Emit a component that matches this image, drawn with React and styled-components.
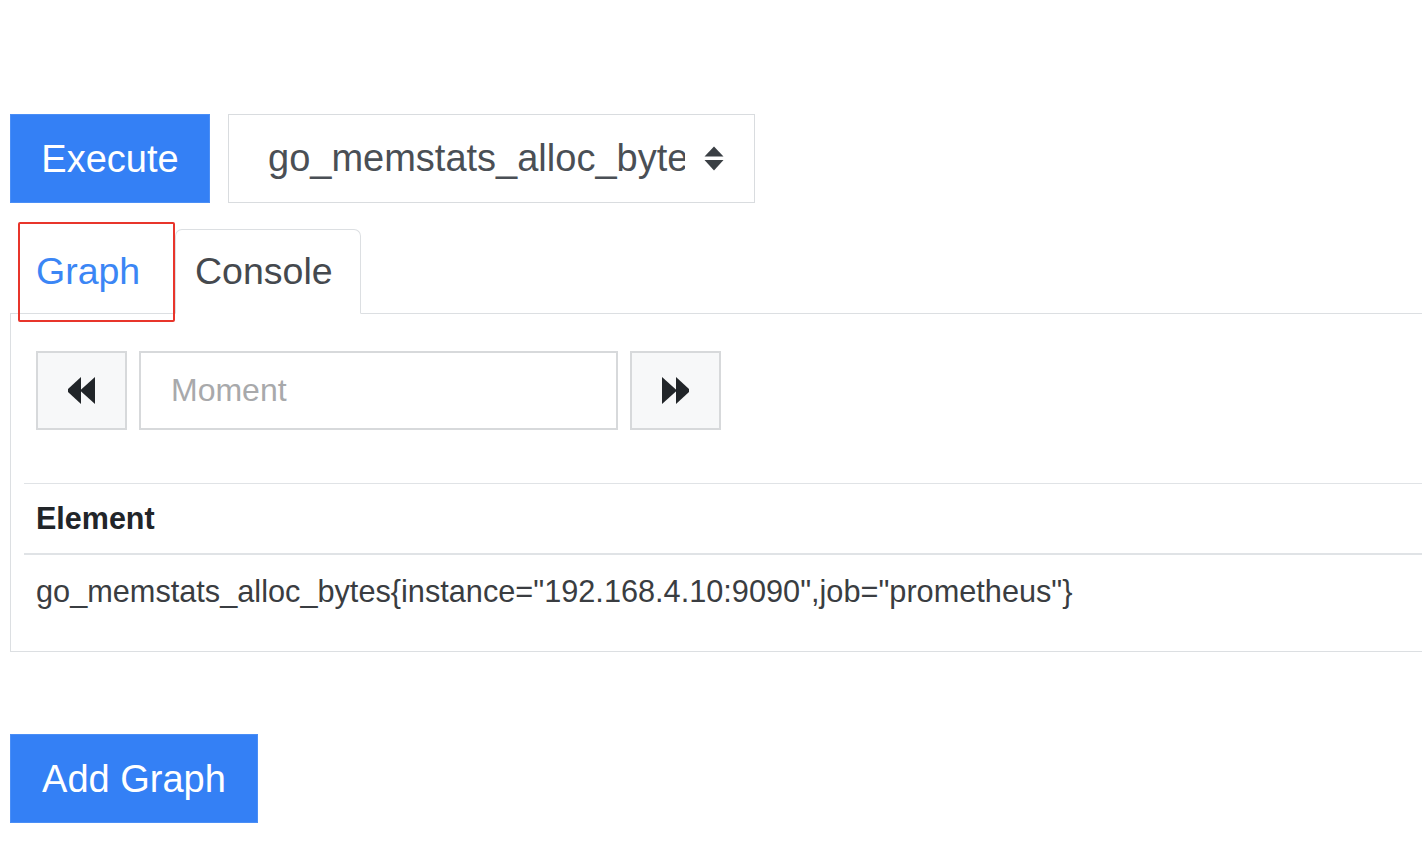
import styled, { createGlobalStyle } from "styled-components";

const GlobalStyle = createGlobalStyle`
  body {
    margin: 0;
    background: #fff;
    overflow: hidden;
    font-family: "Liberation Sans", Arial, sans-serif;
  }
  * {
    box-sizing: border-box;
  }
`;

function BackwardIcon() {
  return (
    <svg width="29" height="29" viewBox="0 0 29 29" fill="#212529">
      <polygon points="1,13 14,1 14,28 1,16" />
      <polygon points="13,14.5 28,1 28,28" />
    </svg>
  );
}

function ForwardIcon() {
  return (
    <svg width="29" height="29" viewBox="0 0 29 29" fill="#212529">
      <polygon points="28,13 15,1 15,28 28,16" />
      <polygon points="16,14.5 1,1 1,28" />
    </svg>
  );
}

function SortIcon() {
  return (
    <svg width="20" height="25" viewBox="0 0 20 25" fill="#3a3f44">
      <polygon points="10,0.5 19.5,10.5 0.5,10.5" />
      <polygon points="10,24.5 19.5,14 0.5,14" />
    </svg>
  );
}

export default function App() {
  return (
    <>
      <GlobalStyle />
      <Page>
        <QueryRow>
          <PrimaryButton $width={200}>Execute</PrimaryButton>
          <MetricSelect>
            <SelectText>go_memstats_alloc_bytes</SelectText>
            <SortIcon />
          </MetricSelect>
        </QueryRow>

        <TabList>
          <Tab $width={157} $active $highlighted>
            Graph
          </Tab>
          <Tab $width={186} $bordered>
            Console
          </Tab>
        </TabList>

        <Panel>
          <Controls>
            <StepButton>
              <BackwardIcon />
            </StepButton>
            <MomentInput placeholder="Moment" />
            <StepButton>
              <ForwardIcon />
            </StepButton>
          </Controls>

          <ResultTable>
            <thead>
              <tr>
                <HeadCell>Element</HeadCell>
              </tr>
            </thead>
            <tbody>
              <tr>
                <Cell>
                  go_memstats_alloc_bytes{"{"}instance="192.168.4.10:9090",job="prometheus"{"}"}
                </Cell>
              </tr>
            </tbody>
          </ResultTable>
        </Panel>

        <AddRow>
          <PrimaryButton $width={248}>Add Graph</PrimaryButton>
        </AddRow>
      </Page>
    </>
  );
}

const Page = styled.div`
  padding: 114px 0 0 10px;
  width: 1460px;
`;

const QueryRow = styled.div`
  display: flex;
  gap: 18px;
`;

const PrimaryButton = styled.button`
  width: ${({ $width }) => $width}px;
  height: 89px;
  background-color: #3480f5;
  border: 1px solid #4a8ef6;
  color: #fff;
  font-family: "Liberation Sans", Arial, sans-serif;
  font-size: 38px;
  padding: 2px 0 0;
  cursor: pointer;
`;

const MetricSelect = styled.div`
  width: 527px;
  height: 89px;
  border: 1px solid #d9dcdf;
  display: flex;
  align-items: center;
  gap: 19px;
  padding: 0 0 0 39px;
  background: #fff;
`;

const SelectText = styled.span`
  width: 417px;
  flex: none;
  overflow: hidden;
  white-space: nowrap;
  text-overflow: clip;
  font-size: 38px;
  color: #4a4f55;
`;

const TabList = styled.div`
  display: flex;
  margin-top: 26px;
  padding-left: 8px;
  height: 85px;
  border-bottom: 1px solid #dcdfe2;
`;

const Tab = styled.div`
  position: relative;
  width: ${({ $width }) => $width}px;
  height: ${({ $bordered }) => ($bordered ? "85px" : "84px")};
  display: flex;
  align-items: center;
  padding-left: ${({ $bordered }) => ($bordered ? "19px" : "18px")};
  font-size: 37.5px;
  color: ${({ $active }) => ($active ? "#3b86f5" : "#45494e")};
  background: #fff;
  border: ${({ $bordered }) => ($bordered ? "1px solid #dcdfe2" : "none")};
  border-bottom-color: #fff;
  border-radius: 7px 7px 0 0;

  ${({ $highlighted }) =>
    $highlighted &&
    `
    &::after {
      content: "";
      position: absolute;
      top: -7px;
      bottom: -9px;
      left: 0;
      right: 0;
      border: 2px solid #e8352b;
      border-radius: 2px;
    }
  `}
`;

const Panel = styled.div`
  width: 1440px;
  border: 1px solid #dcdfe2;
  border-top: none;
  padding: 37px 0 26px 13px;
`;

const Controls = styled.div`
  display: flex;
  margin-left: 12px;
  gap: 12px;
`;

const StepButton = styled.button`
  width: 91px;
  height: 79px;
  background: #f7f8f9;
  border: 2px solid #d7d9db;
  display: flex;
  align-items: center;
  justify-content: center;
  padding: 0;
`;

const MomentInput = styled.input`
  width: 479px;
  height: 79px;
  border: 2px solid #d7d9db;
  padding: 0 0 0 30px;
  font-family: "Liberation Sans", Arial, sans-serif;
  font-size: 32px;
  outline: none;

  &::placeholder {
    color: #a8a9ab;
  }
`;

const ResultTable = styled.table`
  margin-top: 53px;
  width: 100%;
  border-collapse: collapse;
`;

const HeadCell = styled.th`
  height: 70px;
  text-align: left;
  padding: 0 0 0 12px;
  border-top: 1px solid #e0e3e6;
  border-bottom: 2px solid #e0e3e6;
  font-size: 30.5px;
  font-weight: bold;
  color: #212529;
`;

const Cell = styled.td`
  height: 71px;
  padding: 4px 0 0 12px;
  font-size: 30.7px;
  color: #3a3d41;
  white-space: nowrap;
`;

const AddRow = styled.div`
  margin-top: 82px;
`;
